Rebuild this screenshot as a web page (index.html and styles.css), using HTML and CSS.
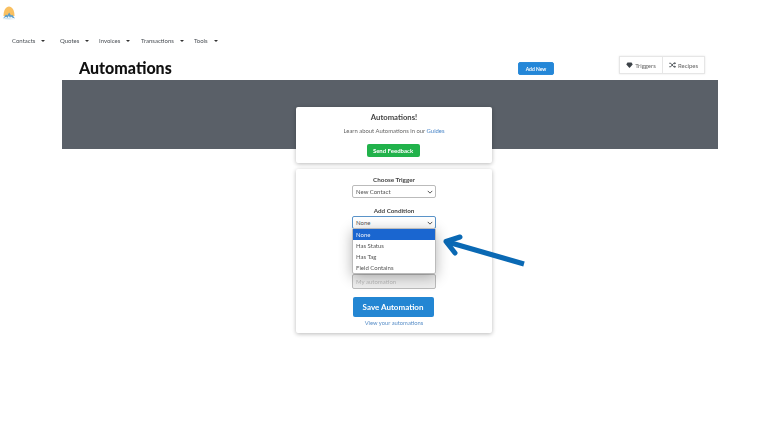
FILE: index.html
```html
<!DOCTYPE html>
<html lang="en">
<head>
<meta charset="utf-8">
<title>Automations</title>
<link rel="stylesheet" href="styles.css">
</head>
<body>
<div class="page">
<header class="brand">
  <svg class="logo" viewBox="0 0 14 14" width="14" height="14" aria-hidden="true">
    <path d="M1.5 10 C1.5 4 4 0.5 7 0.5 C10 0.5 12.5 4 12.5 10 Z" fill="#f9c061"/>
    <path d="M1 12.5 L4 8.5 L5.3 9.6 L7.2 6.5 L9 9.5 L10.2 8.8 L13 12.5 L10 11.6 L9 10.6 L8 12 L6.8 9.8 L5.6 12.2 L4.4 10.8 Z" fill="#5b9dcb"/>
    <path d="M0.5 13 L5 11.5 L9 12.5 L13.5 13 L7 13.5 Z" fill="#cfe5f3"/>
  </svg>
</header>
<nav class="nav">
  <a class="nav-item nav-contacts">Contacts<span class="caret"></span></a>
  <a class="nav-item nav-quotes">Quotes<span class="caret"></span></a>
  <a class="nav-item nav-invoices">Invoices<span class="caret"></span></a>
  <a class="nav-item nav-transactions">Transactions<span class="caret"></span></a>
  <a class="nav-item">Tools<span class="caret"></span></a>
</nav>
<section class="titlebar">
  <h1 class="title">Automations</h1>
  <button class="add-new">Add New</button>
  <div class="tabs">
    <div class="tab">
      <svg viewBox="0 0 12 10" width="7" height="6" aria-hidden="true"><path d="M6 10 L0.5 4 L2.5 0.5 H9.5 L11.5 4 Z" fill="#3c4248"/></svg>
      Triggers
    </div>
    <div class="tab">
      <svg viewBox="0 0 12 10" width="7" height="6" aria-hidden="true"><path d="M0.5 2 H3 L8 8 H10.5 M0.5 8 H3 L8 2 H10.5" fill="none" stroke="#3c4248" stroke-width="1.5"/><path d="M9.5 0 L12 2 L9.5 4 Z M9.5 6 L12 8 L9.5 10 Z" fill="#3c4248"/></svg>
      Recipes
    </div>
  </div>
</section>
<div class="banner"></div>
<main class="cards">
  <section class="card intro">
    <h2 class="intro-title">Automations!</h2>
    <p class="intro-text">Learn about Automations in our <a class="link">Guides</a></p>
    <button class="feedback">Send Feedback</button>
  </section>
  <section class="card form">
    <label class="label">Choose Trigger</label>
    <div class="select">New Contact<svg class="chev" viewBox="0 0 8 5" width="6" height="4" aria-hidden="true"><path d="M1 1 L4 4 L7 1" fill="none" stroke="#444" stroke-width="1.2"/></svg></div>
    <label class="label label-gap">Add Condition</label>
    <div class="select-wrap">
      <div class="select focused">None<svg class="chev" viewBox="0 0 8 5" width="6" height="4" aria-hidden="true"><path d="M1 1 L4 4 L7 1" fill="none" stroke="#444" stroke-width="1.2"/></svg></div>
      <ul class="menu">
        <li class="opt active">None</li>
        <li class="opt">Has Status</li>
        <li class="opt">Has Tag</li>
        <li class="opt">Field Contains</li>
      </ul>
    </div>
    <div class="name-input">My automation</div>
    <button class="save">Save Automation</button>
    <a class="view">View your automations</a>
  </section>
</main>
<svg class="arrow" viewBox="0 0 84 34" width="84" height="34" aria-hidden="true">
  <path d="M3 8.5 L81 31" fill="none" stroke="#0a69b4" stroke-width="5"/>
  <path d="M17 4 L3 8.5 L12 20" fill="none" stroke="#0a69b4" stroke-width="5" stroke-linecap="round" stroke-linejoin="round"/>
</svg>
</div>
</body>
</html>
```
FILE: styles.css
```css
* { box-sizing: border-box; }
html, body { margin: 0; height: 432px; overflow: hidden; background: #fff; }
body { font-family: Lato, "Open Sans", sans-serif; color: #444; }
.page { position: relative; height: 432px; filter: blur(.35px); }
.brand { height: 35px; padding: 6px 0 0 2px; }
.logo { display: block; }
.nav { display: flex; height: 12px; padding-left: 12px; font-size: 6px; line-height: 12px; color: #4a4f55; }
.nav-item { display: flex; align-items: center; }
.nav-contacts { width: 48px; }
.nav-quotes { width: 39px; }
.nav-invoices { width: 42px; }
.nav-transactions { width: 53px; }
.caret { width: 0; height: 0; margin-left: 6px; border: 2px solid transparent; border-top: 2.5px solid #333; border-bottom: 0; }
.titlebar { display: flex; height: 33px; padding-left: 79px; }
.title { margin: 11px 0 0; font-size: 16px; line-height: 20px; font-weight: 900; color: #111; width: 439px; }
.add-new { width: 36px; height: 13px; margin-top: 15px; padding: 0; border: 1px solid #2b8ad8; border-radius: 2px; background: #2487d8; color: #fff; font: 700 5px Lato, sans-serif; }
.tabs { display: flex; height: 18px; margin: 9px 0 0 65px; border: 1px solid #e6e6e6; background: #fff; box-shadow: 0 0 2px rgba(0,0,0,.1); }
.tab { display: flex; align-items: center; justify-content: center; gap: 2px; font-size: 6px; color: #666; width: 42px; }
.tab + .tab { border-left: 1px solid #e6e6e6; }
.banner { height: 69px; margin: 0 50px 0 62px; background: #5a6068; }
.cards { display: flex; flex-direction: column; align-items: center; gap: 6px; width: 196px; margin: -42px 0 0 296px; }
.card { width: 196px; background: #fff; border-radius: 2px; box-shadow: 0 1px 4px rgba(0,0,0,.28); display: flex; flex-direction: column; align-items: center; position: relative; }
.intro { height: 56px; padding-top: 5px; }
.intro-title { margin: 0; font-size: 7.7px; line-height: 10px; font-weight: 700; color: #444; }
.intro-text { margin: 5px 0 0; font-size: 5.9px; line-height: 8px; color: #666; }
.link { color: #4a86c8; }
.feedback { width: 53px; height: 13px; margin: 9px 2px 0 0; padding: 0; border: 0; border-radius: 2px; background: #21b24b; color: #fff; font: 700 6px Lato, sans-serif; }
.form { height: 164px; padding-top: 6px; }
.label { font-size: 6.3px; line-height: 9px; font-weight: 700; color: #444; }
.label-gap { margin-top: 8px; }
.select { width: 84px; height: 13px; margin-top: 1px; padding-left: 3px; display: flex; align-items: center; justify-content: space-between; border: 1px solid #bbb; border-radius: 2px; font-size: 6px; color: #555; background: #fff; }
.select.focused { border-color: #5a93c8; }
.chev { margin-right: 2px; }
.select-wrap { position: relative; width: 84px; margin-top: 1px; }
.select-wrap .select { margin-top: 0; }
.menu { position: absolute; z-index: 2; top: 12px; left: 0; width: 84px; margin: 0; padding: 0; list-style: none; background: #fff; border: 1px solid #bbb; border-radius: 2px; box-shadow: 0 3px 14px rgba(0,0,0,.3); }
.opt { height: 11px; padding-left: 3px; font-size: 6px; line-height: 11px; color: #555; }
.opt.active { background: #1a66d0; color: #e8eef8; }
.name-input { width: 84px; height: 15px; margin-top: 45px; padding-left: 3px; border: 1px solid #bbb; border-radius: 2px; background: #eee; font-size: 6px; line-height: 13px; color: #bbb; }
.save { width: 81px; height: 20px; margin: 8px 2px 0 0; padding: 0; border: 0; border-radius: 2px; background: #2386d3; color: #fff; font: 700 8px Lato, sans-serif; }
.view { margin-top: 2px; font-size: 5.8px; line-height: 8px; color: #5a8fc8; }
.arrow { position: absolute; left: 443px; top: 233px; }
```
